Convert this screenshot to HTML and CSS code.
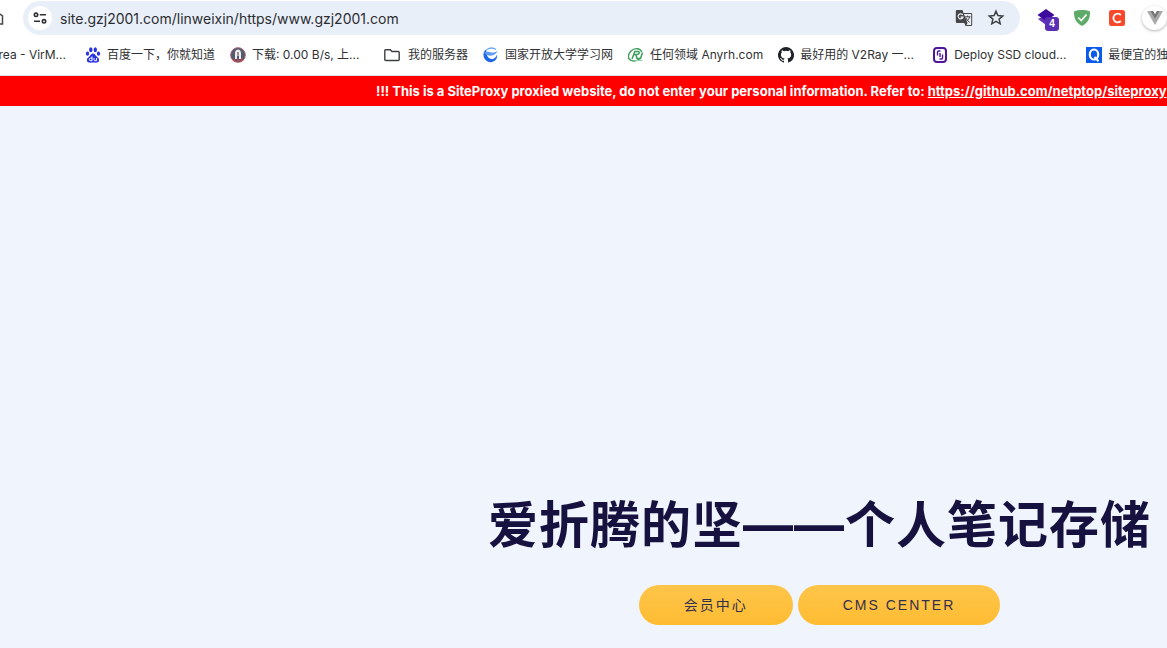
FILE: index.html
```
<!DOCTYPE html>
<html lang="zh-CN">
	<head>
		<meta charset="UTF-8">
		<title>爱折腾的坚——个人笔记存储</title>
		<link rel="stylesheet" href="styles.css">
	</head>
	<body>
		<header class="browser">
			<div class="toolbar">
				<button class="home" aria-label="Home"><svg width="16" height="16" viewBox="0 0 16 16"><path d="M2.500 14V6L8 2l5.500 4v8h-4V9.500h-3V14z" fill="none" stroke="#474747" stroke-width="1.500"/></svg></button>
				<div class="omnibox">
					<button class="siteInfo" aria-label="Site information">
						<svg width="14" height="14" viewBox="0 0 14 14" fill="none" stroke="#303134" stroke-width="1.600"><circle cx="3" cy="3.800" r="1.700"/><path d="M6.800 3.800H13M1 10.300H7"/><circle cx="11" cy="10.300" r="1.700"/></svg>
					</button>
					<input type="text" class="url" aria-label="Address" value="site.gzj2001.com/linweixin/https/www.gzj2001.com">
					<button aria-label="Translate">
						<svg width="18" height="18" viewBox="0 0 18 18"><path d="M2 1h5.500l1 3H16a1.200 1.200 0 0 1 1.200 1.200v10.600A1.200 1.200 0 0 1 16 17h-5.500l-1.300-3H2a1.200 1.200 0 0 1-1.200-1.200V2.200A1.200 1.200 0 0 1 2 1z" fill="#474747"/><path d="M9 5h7.200v11h-4.700l1-2z" fill="#e9eff9"/><path d="M7.800 6A2.500 2.500 0 1 0 8 8.200H5.600" fill="none" stroke="#e9eff9" stroke-width="1.200"/><path d="M9.800 7.800h5.700M12.600 6.500v1.300M14.500 8c-.5 2-1.700 3.500-3.300 4.600M11 9c.8 1.700 2 3.200 3.700 4.300" fill="none" stroke="#474747"/></svg>
					</button>
					<button aria-label="Bookmark this page">
						<svg width="18" height="18" viewBox="0 0 18 18"><path d="M9 2.200l1.900 4.400 4.800.4-3.600 3.100 1.100 4.700L9 12.300l-4.200 2.500 1.100-4.700L2.300 7l4.800-.4z" fill="none" stroke="#3c4043" stroke-width="1.500"/></svg>
					</button>
				</div>
				<div class="extensions">
					<button class="layers" aria-label="Layers">
						<svg width="20" height="20" viewBox="0 0 20 20"><path d="M1 11l8-4 8 4-8 6z" fill="#6533bd"/><path d="M9 1l8.500 6L9 13 .5 7z" fill="#3d0a9e"/></svg>
						<span class="badge">4</span>
					</button>
					<button aria-label="Ad blocker">
						<svg width="16" height="16" viewBox="0 0 16 16"><path d="M8 0c2.500 0 5.500.4 8 1.500C16 7 15.500 12 8 16 .5 12 0 7 0 1.500 2.500.4 5.500 0 8 0z" fill="#5eaa68"/><path d="M4.300 7.500l3 3 5.200-6" fill="none" stroke="#fff" stroke-width="1.600"/></svg>
					</button>
					<button aria-label="C extension">
						<svg width="16" height="16" viewBox="0 0 16 16"><rect width="16" height="16" rx="2.500" fill="#f9492b"/><path d="M11.800 5A4.300 4.300 0 1 0 11.800 11" fill="none" stroke="#fff" stroke-width="1.800"/></svg>
					</button>
					<button class="vue" aria-label="Vue devtools">
						<svg width="16" height="14" viewBox="0 0 16 14"><path d="M0 0h3.200L8 8.300 12.800 0H16L8 14z" fill="#a8a8a8"/><path d="M3.200 0h3L8 3.200 9.800 0h3L8 8.300z" fill="#777"/></svg>
					</button>
				</div>
			</div>
			<nav class="bookmarks">
				<a href="#"><span>rea - VirM...</span></a>
				<a href="#">
					<svg width="16" height="16" viewBox="0 0 16 16" fill="#2932e1"><ellipse cx="5.800" cy="2.700" rx="1.700" ry="2.500"/><ellipse cx="10.300" cy="2.700" rx="1.700" ry="2.500"/><ellipse cx="2.500" cy="6.600" rx="1.600" ry="2.200"/><ellipse cx="13.500" cy="6.600" rx="1.600" ry="2.200"/><path d="M8 6.500c1.700 0 2.300 1.700 3.700 3s2.800 2 2.300 4.200c-.4 2-2.400 2.200-6 1.800-3.600.4-5.600.2-6-1.800-.5-2.200.9-2.900 2.300-4.200S6.300 6.500 8 6.500z"/><path d="M7 9.500v4.200M7 11.200H5.500a1 1 0 0 0 0 2.500H7M9 11v2.200l.6.500h2V11" fill="none" stroke="#fff"/></svg>
					<span>百度一下，你就知道</span>
				</a>
				<a href="#">
					<svg width="16" height="16" viewBox="0 0 16 16"><circle cx="8" cy="8" r="7.300" fill="#535b70" stroke="#a35c68"/><path d="M2.500 13.500l2.500-2v3.600zM13.500 13.500l-2.500-2v3.600z" fill="#e33c48"/><path d="M8 2.500C5.500 3 5 4.500 5 6.500V12h2V8.500h2V12h2V6.500C11 4.500 10.500 3 8 2.500z" fill="#eee"/><path d="M7.200 5h1.600v3H7.200z" fill="#987078"/><path d="M6.800 12.500h2.400L8 15.500z" fill="#e33c48"/></svg>
					<span class="clip">下载: 0.00 B/s, 上...</span>
				</a>
				<a href="#" class="folder">
					<svg width="16" height="16" viewBox="0 0 16 16"><path d="M1.800 2.700h4.500l1.700 1.800h6.200c.6 0 1 .4 1 1v7c0 .6-.4 1-1 1H1.800c-.6 0-1-.4-1-1V3.700c0-.6.400-1 1-1z" fill="none" stroke="#3c4043" stroke-width="1.400"/></svg>
					<span>我的服务器</span>
				</a>
				<a href="#">
					<svg width="16" height="16" viewBox="0 0 16 16"><path d="M3.500 2C1 4 .2 6 .5 8.500 1 13 5 16 9 15c3.500-.8 5.800-4 5-7.500-1 3.500-3.500 5-6.300 4.300C4 11 3 6.500 3.500 2z" fill="#1e66e6"/><path d="M.8 5.500C4 8.500 6 9 9 8.500c3-.6 5-3 6-5-2.500 2-5.500 2.500-8 1.700C5 4.500 3.500 5 .8 5.500z" fill="#5b9cf2"/><path d="M4 2.500C6.500.8 10 .5 13 2.500" fill="none" stroke="#68a6f5" stroke-width="1.500"/></svg>
					<span>国家开放大学学习网</span>
				</a>
				<a href="#">
					<svg width="16" height="16" viewBox="0 0 16 16" fill="none" stroke="#3d9d5c"><path d="M13.800 5C12 1 6.500.5 3 4S-.5 12 3 13.300c3 1.200 7 .3 9.500-2.300" stroke-width="1.400"/><path d="M4 12l2.800-7.500H10c2 0 1.500 3-1 3H6M8 8l1 3.500h3.500l2-6" stroke-width="1.500"/><path d="M6.500 13.500h8" stroke="#9bceb0"/></svg>
					<span>任何领域 Anyrh.com</span>
				</a>
				<a href="#">
					<svg width="16" height="16" viewBox="0 0 16 16"><path fill="#1f2328" d="M8 0a8 8 0 0 0-2.530 15.590c.4.070.55-.17.55-.38v-1.490c-2.010.37-2.530-.49-2.690-.94-.09-.23-.48-.94-.82-1.130-.28-.15-.68-.52-.01-.53.63-.01 1.080.58 1.230.82.72 1.210 1.870.87 2.330.66.070-.52.280-.87.510-1.070-1.780-.2-3.640-.89-3.640-3.950 0-.87.310-1.590.82-2.150-.08-.2-.36-1.020.08-2.120 0 0 .67-.21 2.200.82a7.500 7.500 0 0 1 4 0c1.530-1.040 2.200-.82 2.200-.82.44 1.100.16 1.920.08 2.120.51.56.82 1.270.82 2.150 0 3.070-1.870 3.750-3.650 3.950.29.25.54.73.54 1.480v2.200c0 .21.150.46.550.38A8 8 0 0 0 8 0z"/></svg>
					<span class="clip">最好用的 V2Ray 一...</span>
				</a>
				<a href="#">
					<svg width="16" height="16" viewBox="0 0 16 16" fill="none" stroke="#4f1699"><rect x="2" y="1" width="12" height="14" rx="3" stroke-width="2"/><path d="M8.500 4H6.500Q5.500 4 5.500 5v3.500M7.500 12h2q1 0 1-1V7.500M8 6v4" stroke-width="1.400"/></svg>
					<span class="clip">Deploy SSD cloud...</span>
				</a>
				<a href="#">
					<svg width="16" height="16" viewBox="0 0 16 16"><path d="M0 0h16v16H0z" fill="#0b5bea"/><ellipse cx="8" cy="7.500" rx="4.200" ry="5" fill="none" stroke="#fff" stroke-width="2.200"/><path d="M8.500 10l4 4.300" stroke="#fff" stroke-width="2"/></svg>
					<span>最便宜的独</span>
				</a>
			</nav>
		</header>
		<div class="notice">!!! This is a SiteProxy proxied website, do not enter your personal information. Refer to: <a href="#">https://github.com/netptop/siteproxy</a></div>
		<main class="hero">
			<h1>爱折腾的坚<span class="dash">——</span>个人笔记存储</h1>
			<div class="links">
				<a href="#" class="btn">会员中心</a>
				<a href="#" class="btn">CMS CENTER</a>
			</div>
		</main>
	</body>
</html>
```

FILE: styles.css
```
*{
	box-sizing: border-box;
	padding: 0;
	margin: 0;
}
body{
	display: flex;
	flex-direction: column;
	min-height: 100vh;
	overflow: hidden;
	background-color: #f0f4fd;
	font-family: Inter, "Noto Sans CJK SC", sans-serif;
}
svg{
	display: block;
	flex: none;
}
button{
	border: 0;
	background: none;
}
a{
	color: inherit;
	text-decoration: none;
}

/* browser bars */
.browser{
	background-color: #fff;
	border-bottom: 1px solid #dfe1e5;
}
.toolbar{
	display: flex;
	align-items: center;
	padding-top: 1px;
}
.home{
	display: flex;
	justify-content: flex-end;
	width: 5px;
	margin-right: 18px;
	overflow: hidden;
}
.omnibox{
	display: flex;
	flex: 1;
	align-items: center;
	gap: 14px;
	height: 34px;
	padding: 0 15px 0 5px;
	border-radius: 17px;
	background-color: #e9eff9;
}
.siteInfo{
	display: flex;
	align-items: center;
	justify-content: center;
	width: 24px;
	height: 24px;
	border-radius: 50%;
	background-color: #fff;
}
.url{
	flex: 1;
	min-width: 0;
	margin-left: -6px;
	border: 0;
	outline: 0;
	background: none;
	color: #2b2d31;
	font-family: inherit;
	font-size: 14px;
}
.extensions{
	display: flex;
	align-items: center;
	gap: 15px;
	padding-left: 17px;
}
.extensions button{
	display: flex;
	justify-content: center;
	width: 20px;
}
.extensions .layers{
	position: relative;
}
.badge{
	position: absolute;
	left: 8px;
	top: 9px;
	width: 14px;
	height: 14px;
	border-radius: 3px;
	background-color: #5b2fb4;
	color: #fff;
	font-size: 10px;
	font-weight: bold;
	line-height: 14px;
	text-align: center;
}
.extensions .vue{
	align-items: center;
	width: 25px;
	height: 24px;
	border-radius: 50%;
	box-shadow: 0 1px 3px rgba(0,0,0,.3);
}
.bookmarks{
	display: flex;
	align-items: center;
	gap: 15px;
	height: 40px;
	overflow: hidden;
	color: #303134;
	font-size: 12px;
	line-height: 20px;
	white-space: nowrap;
}
.bookmarks a{
	display: flex;
	flex: none;
	align-items: center;
	gap: 6px;
}
.bookmarks a:first-child{
	justify-content: flex-end;
	width: 70px;
	padding-right: 4px;
}
.bookmarks .folder{
	gap: 8px;
}
.clip{
	width: 117px;
}

/* proxy warning */
.notice{
	height: 30px;
	padding-left: 376px;
	overflow: hidden;
	background-color: #f00;
	color: #fff;
	font-size: 13px;
	font-weight: bold;
	line-height: 30px;
	white-space: nowrap;
}
.notice a{
	text-decoration: underline;
}

/* page */
.hero{
	display: flex;
	flex: 1;
	flex-direction: column;
	align-items: center;
	justify-content: flex-end;
	padding: 0 0 23px 472px;
}
.hero h1{
	margin-bottom: 24px;
	color: #17113f;
	font-family: "Noto Sans CJK SC", sans-serif;
	font-size: 50px;
	font-weight: bold;
	letter-spacing: 1px;
	line-height: 72px;
	white-space: nowrap;
}
.hero .dash{
	font-family: Inter, sans-serif;
}
.links{
	display: flex;
	gap: 5px;
}
.btn{
	padding: 0 45px;
	border-radius: 20px;
	background-image: linear-gradient(#fec54a, #ffbc32);
	color: #33304f;
	font-family: "Liberation Sans", "Noto Sans CJK SC", sans-serif;
	font-size: 14px;
	letter-spacing: 2px;
	line-height: 40px;
}
```
